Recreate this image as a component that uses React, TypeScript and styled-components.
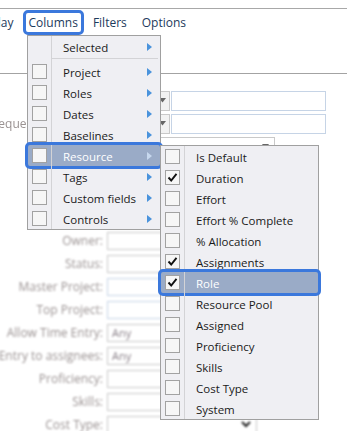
import React from 'react'
import styled, { createGlobalStyle, css } from 'styled-components'

const GlobalStyle = createGlobalStyle`
  html, body {
    margin: 0;
    padding: 0;
    background: #ffffff;
  }
  body {
    font-family: "Open Sans", "Noto Sans", sans-serif;
  }
`

const Page = styled.div`
  position: relative;
  width: 347px;
  height: 431px;
  overflow: hidden;
  background: #ffffff;
  padding-top: 8px;
  box-sizing: border-box;
`

/* ---------- top menu bar ---------- */

const MenuBar = styled.div`
  display: flex;
  gap: 3px;
  border-top: 1px solid #a8a8a8;
  padding-top: 1px;
  height: 25px;
`

const MenuBarItem = styled.div<{ $active?: boolean; $shift?: number }>`
  height: 25px;
  box-sizing: border-box;
  padding: 0 3px;
  border: 3px solid transparent;
  border-radius: 5px;
  font-size: 12px;
  line-height: 19px;
  color: #1d3a5c;
  white-space: nowrap;
  margin-left: ${p => (p.$shift ? `${p.$shift}px` : '0')};
  ${p =>
    p.$active &&
    css`
      border-color: #3b78dc;
    `}
`

/* ---------- blurred form behind the menus ---------- */

const Form = styled.div``

const FormHeader = styled.div`
  height: 38px;
  border-bottom: 1px solid #a3a3a3;
`

const FieldGroup = styled.div<{ $gap: number; $soft?: boolean }>`
  display: flex;
  flex-direction: column;
  margin-top: ${p => p.$gap}px;
  filter: blur(${p => (p.$soft ? 0.5 : 1)}px);
`

const FieldRow = styled.div`
  display: flex;
  align-items: center;
  height: 23px;
  gap: 4px;
`

const FieldLabel = styled.div`
  width: 103px;
  flex: none;
  display: flex;
  justify-content: flex-end;
  font-size: 12px;
  color: #9a9292;
  white-space: nowrap;
`

const FieldBox = styled.div<{ $width: number; $tall?: boolean; $tint?: boolean }>`
  width: ${p => p.$width}px;
  height: ${p => (p.$tall ? 20 : 18)}px;
  box-sizing: border-box;
  border: 1px solid ${p => (p.$tint ? '#c6d4e6' : '#c9c9c9')};
  background: #ffffff;
  font-size: 11px;
  line-height: 16px;
  padding: 0 5px 0 4px;
  color: #8a8088;
  display: flex;
  align-items: center;
  justify-content: space-between;
  flex: none;
`

const SelectStub = styled(FieldBox)`
  background: #f2f2f2;
  justify-content: flex-end;
  padding-right: 3px;
`

const Compound = styled.div`
  display: flex;
  gap: 1px;
`

const SmallCaret = () => (
  <svg width="7" height="5" viewBox="0 0 7 5">
    <path d="M0 0 L7 0 L3.5 4.5 Z" fill="#666" />
  </svg>
)

const Chevron = () => (
  <svg width="10" height="7" viewBox="0 0 10 7">
    <path d="M1 1 L5 5 L9 1" fill="none" stroke="#222" strokeWidth="2" />
  </svg>
)

/* ---------- dropdown menus ---------- */

const Menu = styled.div<{ $left: number; $top: number; $width: number }>`
  position: absolute;
  left: ${p => p.$left}px;
  top: ${p => p.$top}px;
  width: ${p => p.$width}px;
  box-sizing: border-box;
  background: #efeff3;
  border: 1px solid #a0a0a0;
  font-size: 11.5px;
  color: #1a1a1a;
`

const Item = styled.div<{ $hot?: boolean }>`
  position: relative;
  display: flex;
  align-items: center;
  height: 21px;
  ${p =>
    p.$hot &&
    css`
      background: #9aabc7;
      color: #ffffff;
      &::after {
        content: '';
        position: absolute;
        inset: -3px -3px;
        border: 3px solid #3b78dc;
        border-radius: 5px;
        pointer-events: none;
      }
    `}
`

const Gutter = styled.div`
  width: 24px;
  align-self: stretch;
  flex: none;
  display: flex;
  align-items: center;
  padding-left: 4px;
  box-sizing: border-box;
  border-right: 1px solid #d3d3d6;
`

const Box = styled.div`
  width: 15px;
  height: 15px;
  box-sizing: border-box;
  border: 1px solid #a2a2a2;
  background: #f6f6f6;
  display: flex;
  align-items: center;
  justify-content: center;
`

const Label = styled.span`
  flex: 1;
  padding-left: 11px;
  padding-top: 2px;
  white-space: nowrap;
`

const ArrowWrap = styled.span`
  width: 5px;
  margin-right: 8px;
  display: flex;
  align-items: center;
`

const Separator = styled.div`
  display: flex;
  height: 4px;
`

const SeparatorLine = styled.div`
  flex: 1;
  margin: 1px 2px 0 0;
  height: 1px;
  background: #d3d3d6;
`

const Check = () => (
  <svg width="11" height="11" viewBox="0 0 11 11">
    <path d="M1.5 5.5 L4.2 8.5 L9.5 1.8" fill="none" stroke="#111" strokeWidth="1.9" />
  </svg>
)

const Arrow = ({ light }: { light?: boolean }) => (
  <svg width="5" height="8" viewBox="0 0 5 8">
    <path d="M0 0 L5 4 L0 8 Z" fill={light ? '#c7d8ee' : '#4a93dc'} />
  </svg>
)

type Entry = { text: string; checked?: boolean; hot?: boolean }

const columnGroups: Entry[] = [
  { text: 'Project' },
  { text: 'Roles' },
  { text: 'Dates' },
  { text: 'Baselines' },
  { text: 'Resource', hot: true },
  { text: 'Tags' },
  { text: 'Custom fields' },
  { text: 'Controls' },
]

const resourceColumns: Entry[] = [
  { text: 'Is Default' },
  { text: 'Duration', checked: true },
  { text: 'Effort' },
  { text: 'Effort % Complete' },
  { text: '% Allocation' },
  { text: 'Assignments', checked: true },
  { text: 'Role', checked: true, hot: true },
  { text: 'Resource Pool' },
  { text: 'Assigned' },
  { text: 'Proficiency' },
  { text: 'Skills' },
  { text: 'Cost Type' },
  { text: 'System' },
]

const lowerFields = [
  { label: 'Owner:' },
  { label: 'Status:' },
  { label: 'Master Project:', tint: true },
  { label: 'Top Project:', tint: true },
  { label: 'Allow Time Entry:', value: 'Any' },
  { label: 'Allow Time Entry to assignees:', value: 'Any' },
  { label: 'Proficiency:' },
  { label: 'Skills:' },
  { label: 'Cost Type:', select: true },
]

export default function App() {
  return (
    <Page>
      <GlobalStyle />
      <MenuBar>
        <MenuBarItem $shift={-33}>Display</MenuBarItem>
        <MenuBarItem $active>Columns</MenuBarItem>
        <MenuBarItem>Filters</MenuBarItem>
        <MenuBarItem>Options</MenuBarItem>
      </MenuBar>

      <Form>
        <FormHeader />
        <FieldGroup $gap={15} $soft>
          <FieldRow>
            <FieldLabel>Priority:</FieldLabel>
            <Compound>
              <SelectStub $width={63} $tall>
                <SmallCaret />
              </SelectStub>
              <FieldBox $width={155} $tall $tint />
            </Compound>
          </FieldRow>
          <FieldRow>
            <FieldLabel>Frequency of review:</FieldLabel>
            <Compound>
              <SelectStub $width={63} $tall>
                <SmallCaret />
              </SelectStub>
              <FieldBox $width={155} $tall $tint />
            </Compound>
          </FieldRow>
          <FieldRow>
            <FieldLabel>Type:</FieldLabel>
            <FieldBox $width={168} $tall>
              <span />
              <SmallCaret />
            </FieldBox>
          </FieldRow>
        </FieldGroup>

        <FieldGroup $gap={71}>
          {lowerFields.map(f => (
            <FieldRow key={f.label}>
              <FieldLabel>{f.label}</FieldLabel>
              <FieldBox $width={150} $tint={f.tint}>
                <span>{f.value}</span>
                {f.select && <Chevron />}
              </FieldBox>
            </FieldRow>
          ))}
        </FieldGroup>
      </Form>

      <Menu $left={27} $top={35} $width={134}>
        <Item>
          <Gutter />
          <Label>Selected</Label>
          <ArrowWrap>
            <Arrow />
          </ArrowWrap>
        </Item>
        <Separator>
          <Gutter />
          <SeparatorLine />
        </Separator>
        {columnGroups.map(e => (
          <Item key={e.text} $hot={e.hot}>
            <Gutter>
              <Box />
            </Gutter>
            <Label>{e.text}</Label>
            <ArrowWrap>
              <Arrow light={e.hot} />
            </ArrowWrap>
          </Item>
        ))}
      </Menu>

      <Menu $left={160} $top={145} $width={159}>
        {resourceColumns.map(e => (
          <Item key={e.text} $hot={e.hot}>
            <Gutter>
              <Box>{e.checked && <Check />}</Box>
            </Gutter>
            <Label>{e.text}</Label>
          </Item>
        ))}
      </Menu>
    </Page>
  )
}
